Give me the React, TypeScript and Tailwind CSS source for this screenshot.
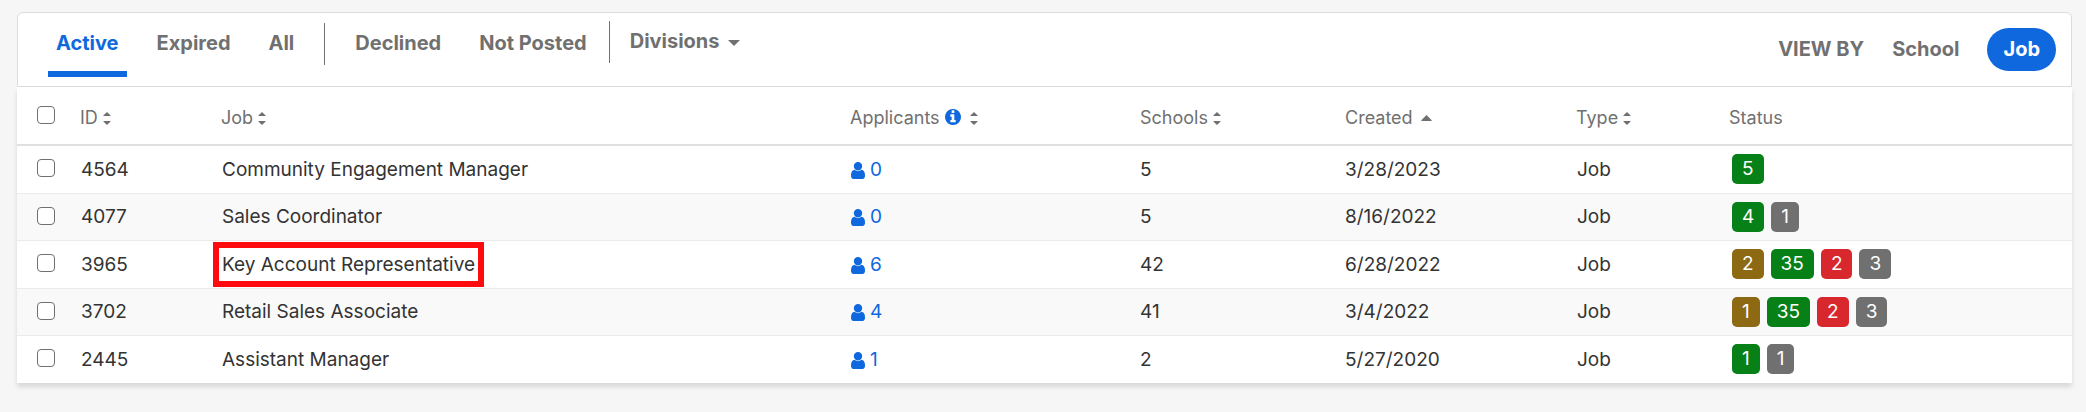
import clsx from "clsx";

type Tone = "draft" | "active" | "declined" | "closed";

type JobRow = {
    id: number;
    job: string;
    applicants: number;
    schools: number;
    created: string;
    type: string;
    status: [Tone, number][];
    highlighted?: boolean;
};

const toneClasses: Record<Tone, string> = {
    draft: "bg-[#8d6914]",
    active: "bg-[#078017]",
    declined: "bg-[#d9272e]",
    closed: "bg-[#707070]",
};

const jobs: JobRow[] = [
    { id: 4564, job: "Community Engagement Manager", applicants: 0, schools: 5, created: "3/28/2023", type: "Job", status: [["active", 5]] },
    { id: 4077, job: "Sales Coordinator", applicants: 0, schools: 5, created: "8/16/2022", type: "Job", status: [["active", 4], ["closed", 1]] },
    { id: 3965, job: "Key Account Representative", applicants: 6, schools: 42, created: "6/28/2022", type: "Job", status: [["draft", 2], ["active", 35], ["declined", 2], ["closed", 3]], highlighted: true },
    { id: 3702, job: "Retail Sales Associate", applicants: 4, schools: 41, created: "3/4/2022", type: "Job", status: [["draft", 1], ["active", 35], ["declined", 2], ["closed", 3]] },
    { id: 2445, job: "Assistant Manager", applicants: 1, schools: 2, created: "5/27/2020", type: "Job", status: [["active", 1], ["closed", 1]] },
];

const SortIcon = () => (
    <svg className="w-2 h-[13px] mt-[2px]" viewBox="0 0 8 13" fill="currentColor" aria-hidden="true">
        <path d="M4 0l3.6 3.4q.3.6-.4.6H.8q-.7 0-.4-.6zM4 13L.4 9.6Q.1 9 .8 9h6.4q.7 0 .4.6z" />
    </svg>
);

const SortUpIcon = () => (
    <svg className="w-[11px] h-[6px] mt-[2px]" viewBox="0 0 11 6" fill="currentColor" aria-hidden="true">
        <path d="M5.5 0l5.2 5.2q.3.8-.5.8H.8Q0 6 .3 5.2z" />
    </svg>
);

const InfoIcon = () => (
    <svg className="w-4 h-4 text-[#0f68dd]" viewBox="128 128 1536 1536" fill="currentColor" aria-hidden="true">
        <path d="M1152 1376v-160q0-14-9-23t-23-9h-96v-512q0-14-9-23t-23-9h-320q-14 0-23 9t-9 23v160q0 14 9 23t23 9h96v320h-96q-14 0-23 9t-9 23v160q0 14 9 23t23 9h448q14 0 23-9t9-23zm-128-896v-192q0-14-9-23t-23-9h-192q-14 0-23 9t-9 23v192q0 14 9 23t23 9h192q14 0 23-9t9-23zm640 416q0 209-103 385.5t-279.5 279.5-385.5 103-385.5-103-279.5-279.5-103-385.5 103-385.5 279.5-279.5 385.5-103 385.5 103 279.5 279.5 103 385.5z" />
    </svg>
);

const UserIcon = () => (
    <svg className="w-[14px] h-[17px]" viewBox="256 128 1280 1536" fill="currentColor" aria-hidden="true">
        <path d="M1536 1399q0 109-62.5 187t-150.5 78h-854q-88 0-150.5-78t-62.5-187q0-85 8.5-160.5t31.5-152 58.5-131 94-89 134.5-34.5q131 128 313 128t313-128q76 0 134.5 34.5t94 89 58.5 131 31.5 152 8.5 160.5zm-256-887q0 159-112.5 271.5t-271.5 112.5-271.5-112.5-112.5-271.5 112.5-271.5 271.5-112.5 271.5 112.5 112.5 271.5z" />
    </svg>
);

const Checkbox = ({ label }: { label: string }) => (
    <input
        type="checkbox"
        aria-label={label}
        className="block appearance-none w-[18px] h-[18px] ml-5 mb-[2px] rounded-[4px] border border-[#707070] bg-white checked:bg-[#0f68dd]"
    />
);

const Tabs = () => (
    <nav className="flex items-start gap-[22px] pl-[30px] pt-[10px] text-[20px] leading-[40px] font-bold">
        <a href="#active" className="px-2 h-[54px] text-[#0f68dd] border-b-6 border-[#0f68dd]">Active</a>
        <a href="#expired" className="px-2">Expired</a>
        <a href="#all" className="px-2">All</a>
        <span className="w-px h-[42px] bg-[#707070]" />
        <a href="#declined" className="px-2">Declined</a>
        <a href="#not-posted" className="px-2">Not Posted</a>
        <div className="flex items-start gap-5 -mt-[2px] -ml-2">
            <span className="w-px h-[42px] bg-[#707070]" />
            <button type="button" className="flex items-center gap-2">
                Divisions
                <svg className="w-3 h-[6px] mt-1" viewBox="0 0 12 6" fill="currentColor" aria-hidden="true">
                    <path d="M0 0h12L6 6z" />
                </svg>
            </button>
        </div>
    </nav>
);

const App = () => {
    return (
        <main className="min-h-screen bg-[#f6f6f6] pt-3 pl-[17px] pr-[14px] font-['Inter',sans-serif] text-[#707070]">
            <header className="flex justify-between h-[75px] bg-white border border-[#dcdcdc] rounded-t-md">
                <Tabs />
                <div className="flex items-center pr-[15px] text-[20px] leading-[43px] font-bold">
                    <span>VIEW BY</span>
                    <button type="button" className="ml-7">School</button>
                    <button type="button" className="ml-7 px-4 h-[43px] rounded-full bg-[#0f68dd] text-white">Job</button>
                </div>
            </header>

            <table className="w-full table-fixed bg-white text-left shadow-[0_4px_5px_rgba(0,0,0,0.12)]">
                <thead>
                    <tr className="h-[58px] text-[18px] border-b-2 border-[#e0e0e0]">
                        <th className="w-[63px]"><Checkbox label="Select all jobs" /></th>
                        <th className="w-[141px] pt-[3px] font-normal">
                            <button type="button" className="flex items-center gap-[5px]">ID <SortIcon /></button>
                        </th>
                        <th className="w-[629px] pt-[3px] font-normal">
                            <button type="button" className="flex items-center gap-[5px]">Job <SortIcon /></button>
                        </th>
                        <th className="w-[290px] pt-[3px] font-normal">
                            <button type="button" className="flex items-center gap-[5px]">
                                Applicants <InfoIcon /> <span className="pl-1"><SortIcon /></span>
                            </button>
                        </th>
                        <th className="w-[205px] pt-[3px] font-normal">
                            <button type="button" className="flex items-center gap-[5px]">Schools <SortIcon /></button>
                        </th>
                        <th className="w-[231px] pt-[3px] font-normal">
                            <button type="button" className="flex items-center gap-2">Created <SortUpIcon /></button>
                        </th>
                        <th className="w-[153px] pt-[3px] font-normal">
                            <button type="button" className="flex items-center gap-[5px]">Type <SortIcon /></button>
                        </th>
                        <th className="w-[343px] pt-[3px] font-normal">Status</th>
                    </tr>
                </thead>
                <tbody className="text-[19px] text-[#333]">
                    {jobs.map((row) => (
                        <tr key={row.id} className="h-12 even:h-[47px] even:bg-[#f9f9f9] border-b border-[#ebebeb] last:border-b-0">
                            <td><Checkbox label={`Select job ${row.id}`} /></td>
                            <td className="pl-px pt-[2px]">{row.id}</td>
                            <td className="pl-px pt-[2px]">
                                <span className="relative">
                                    {row.job}
                                    {row.highlighted && (
                                        <span className="absolute -inset-x-[9px] -inset-y-[11px] border-6 border-[#ff0a0f]" />
                                    )}
                                </span>
                            </td>
                            <td className="pl-px pt-[2px]">
                                <a href="#applicants" className="flex items-center gap-[5px] text-[#0f68dd]">
                                    <UserIcon /> {row.applicants}
                                </a>
                            </td>
                            <td className="pt-[2px]">{row.schools}</td>
                            <td className="pt-[2px]">{row.created}</td>
                            <td className="pl-px pt-[2px]">{row.type}</td>
                            <td>
                                <div className="flex gap-[7px] pl-[3px] text-white leading-[30px]">
                                    {row.status.map(([tone, count]) => (
                                        <span key={tone} className={clsx("px-[10px] rounded-[5px]", toneClasses[tone])}>
                                            {count}
                                        </span>
                                    ))}
                                </div>
                            </td>
                        </tr>
                    ))}
                </tbody>
            </table>
        </main>
    );
};

export default App;
